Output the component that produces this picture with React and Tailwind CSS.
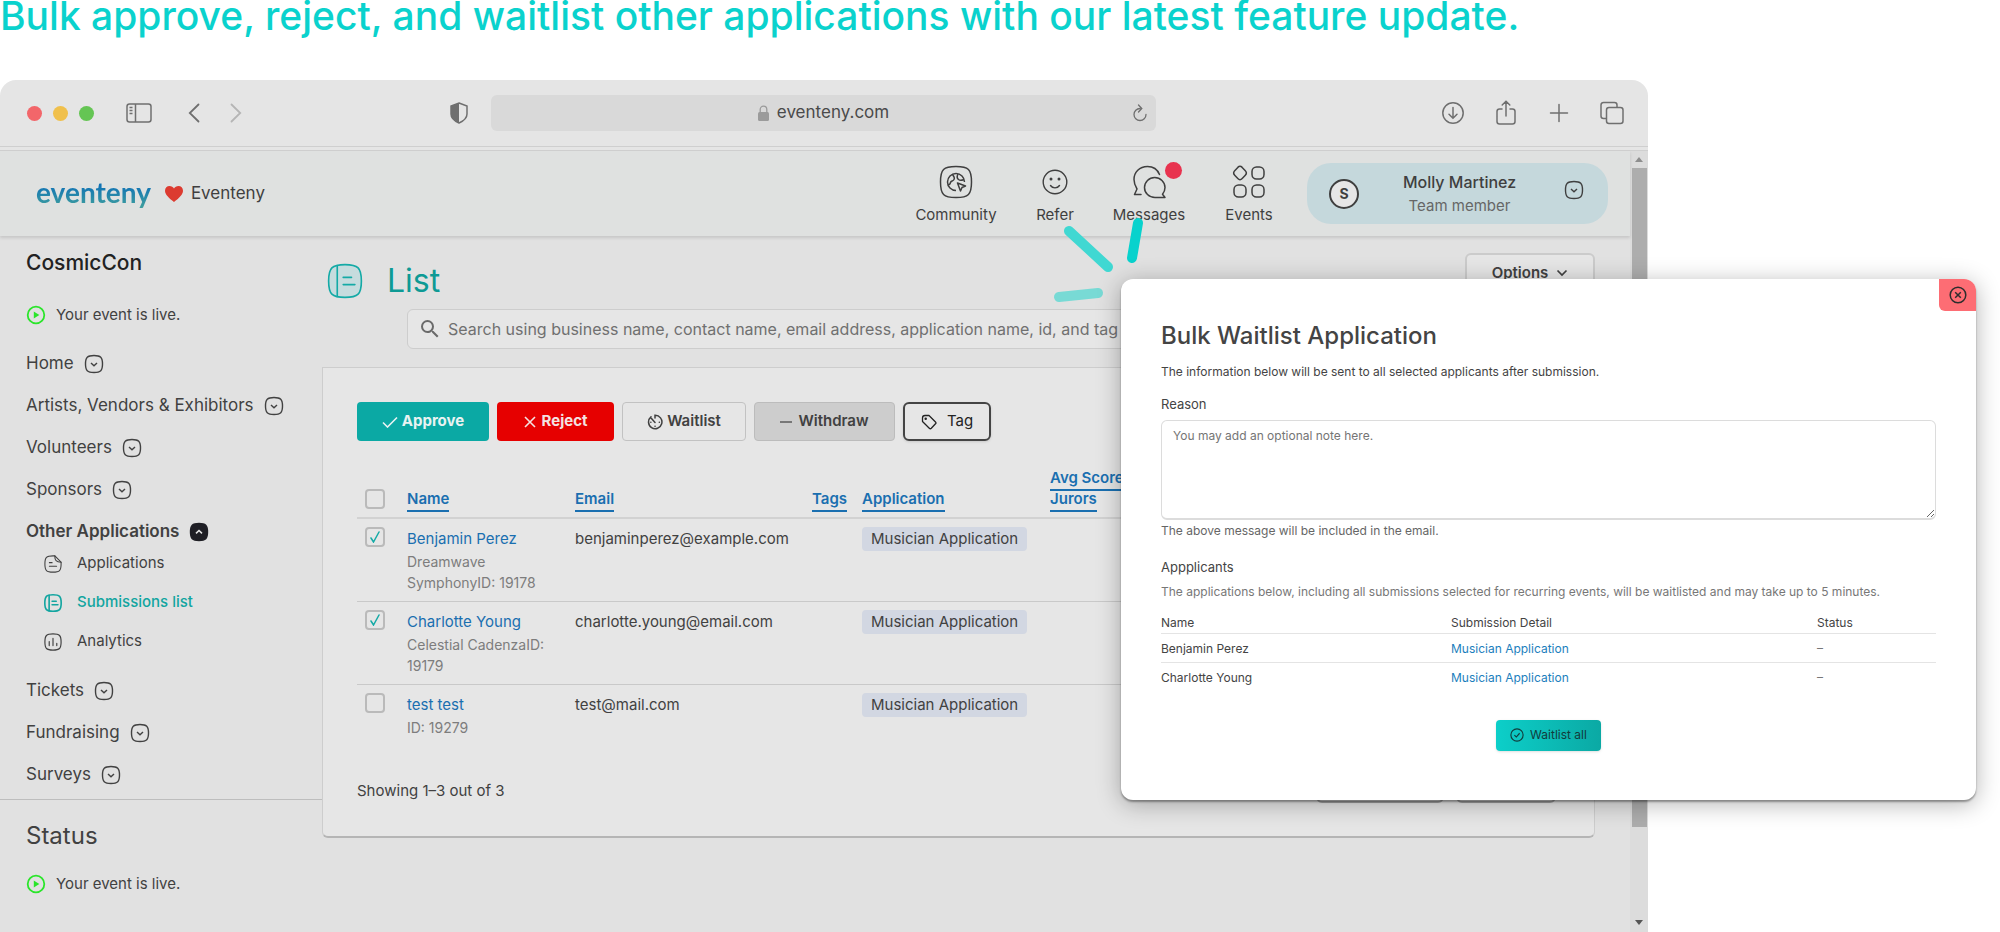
import React from 'react';
import { MdSearch } from 'react-icons/md';

const ChevronBox = ({ up, className = '' }) => (
  <svg viewBox="0 0 20 20" className={`h-5 w-5 shrink-0 ${className}`} fill="none" stroke="currentColor" strokeWidth="1.4">
    <path
      d="M10 1.5c6.600 0 8.500 1.900 8.500 8.500s-1.900 8.500-8.500 8.500S1.500 16.600 1.500 10 3.400 1.500 10 1.500z"
      fill={up ? 'currentColor' : 'none'}
    />
    {up ? (
      <path d="M7 11.300l3-2.800 3 2.800" stroke="#e6e6e6" strokeWidth="1.600" />
    ) : (
      <path d="M7 9l3 2.800L13 9" />
    )}
  </svg>
);

const ListIcon = ({ className = '', strokeWidth = 1.4, fill = 'none' }) => (
  <svg viewBox="0 0 20 20" className={`shrink-0 ${className}`} fill="none" stroke="currentColor" strokeWidth={strokeWidth} strokeLinecap="round">
    <path d="M10 .9c7.300 0 9.100 1.800 9.100 9.100s-1.800 9.100-9.100 9.100S.9 17.300.9 10 2.700.9 10 .9z" fill={fill} />
    <path d="M5.700 1.400v17.200M9 8h4.600M9 12h6.500" />
  </svg>
);

const FileIcon = () => (
  <svg viewBox="0 0 20 20" className="h-[18px] w-[18px] shrink-0" fill="none" stroke="currentColor" strokeWidth="1.200" strokeLinecap="round">
    <path d="M12 1h-2C2.700 1 1 2.700 1 10s1.700 9 9 9 9-1.700 9-9V8z" />
    <path d="M12 1c0 5 1.500 7 7 7M6 8.500h3M6 12.500h8" />
  </svg>
);

const ChartIcon = () => (
  <svg viewBox="0 0 20 20" className="h-[18px] w-[18px] shrink-0" fill="none" stroke="currentColor" strokeWidth="1.300" strokeLinecap="round">
    <path d="M10 1c7.300 0 9 1.700 9 9s-1.700 9-9 9-9-1.700-9-9 1.700-9 9-9z" />
    <path d="M5.800 9.500V14M10 6v8M14.200 11.500V14" />
  </svg>
);

const LiveStatus = () => (
  <div className="flex h-6 items-center gap-[10px] text-[15px]">
    <svg viewBox="0 0 20 20" className="h-5 w-5 shrink-0">
      <circle cx="10" cy="10" r="8.300" fill="none" stroke="#2ae52a" strokeWidth="1.800" />
      <path d="M7.800 6.500l5.500 3.500-5.500 3.500z" fill="#2ae52a" />
    </svg>
    <span>Your event is live.</span>
  </div>
);

const SideItem = ({ label, active }) => (
  <a href="#" className={`flex h-6 items-center gap-[10px] text-[17px] whitespace-nowrap ${active ? 'font-semibold' : ''}`}>
    {label}
    <ChevronBox up={active} className={active ? 'text-[#1f1f25]' : ''} />
  </a>
);

const SubItem = ({ icon, label, active }) => (
  <a href="#" className={`flex h-[39px] items-center gap-[15px] pl-[18px] text-[15px] ${active ? 'text-[#12a5a0]' : ''}`}>
    {icon}
    <span className={active ? 'font-medium' : ''}>{label}</span>
  </a>
);

const Sidebar = () => (
  <aside className="w-[322px] shrink-0 pt-[13px] text-[#414141]">
    <div className="px-[26px]">
      <h2 className="text-[21px] leading-7 font-medium text-[#222]">CosmicCon</h2>
      <div className="mt-[26px]">
        <LiveStatus />
      </div>
      <nav className="mt-[25px] flex flex-col gap-[18px]">
        <SideItem label="Home" />
        <SideItem label="Artists, Vendors & Exhibitors" />
        <SideItem label="Volunteers" />
        <SideItem label="Sponsors" />
        <div>
          <SideItem label="Other Applications" active />
          <SubItem icon={<FileIcon />} label="Applications" />
          <SubItem icon={<ListIcon className="h-[18px] w-[18px]" strokeWidth={1.8} />} label="Submissions list" active />
          <SubItem icon={<ChartIcon />} label="Analytics" />
        </div>
        <SideItem label="Tickets" />
        <SideItem label="Fundraising" />
        <SideItem label="Surveys" />
      </nav>
    </div>
    <div className="mt-3 border-t border-[#bdbdbd] px-[26px] pt-5">
      <h2 className="text-2xl leading-8">Status</h2>
      <div className="mt-5">
        <LiveStatus />
      </div>
    </div>
  </aside>
);

const BrowserBar = () => (
  <div className="grid h-[67px] grid-cols-[491px_1fr_492px] items-center border-b border-[#cfcfcf] text-[#6f6f6f]">
    <div className="flex items-center pr-[23px] pl-[27px]">
      <div className="flex gap-[11px]">
        <span className="h-[15px] w-[15px] rounded-full bg-[#f2666a]" />
        <span className="h-[15px] w-[15px] rounded-full bg-[#f0c04c]" />
        <span className="h-[15px] w-[15px] rounded-full bg-[#65c554]" />
      </div>
      <svg viewBox="0 0 26 20" className="ml-8 h-5 w-[26px]" fill="none" stroke="currentColor" strokeWidth="1.500">
        <rect x="1" y="1" width="24" height="18" rx="2.500" />
        <path d="M9.500 1v18M3.500 4.500h3M3.500 7.500h3M3.500 10.500h3" />
      </svg>
      <svg viewBox="0 0 12 20" className="ml-9 h-5 w-3" fill="none" stroke="currentColor" strokeWidth="1.800" strokeLinecap="round">
        <path d="M10.500 1.500L1.800 10l8.700 8.500" />
      </svg>
      <svg viewBox="0 0 12 20" className="ml-[30px] h-5 w-3 text-[#b5b5b5]" fill="none" stroke="currentColor" strokeWidth="1.800" strokeLinecap="round">
        <path d="M1.500 1.500L10.200 10l-8.700 8.500" />
      </svg>
      <svg viewBox="0 0 18 22" className="ml-auto h-[22px] w-[18px]">
        <path d="M9 1l8 3v8c0 4-3.500 7-8 9-4.500-2-8-5-8-9V4z" fill="none" stroke="currentColor" strokeWidth="1.500" />
        <path d="M9 1v20c-4.500-2-8-5-8-9V4z" fill="currentColor" />
      </svg>
    </div>
    <div className="flex h-9 items-center rounded-md bg-[#d9d9d9] pr-2">
      <div className="flex flex-1 items-center justify-center gap-2 pl-6 text-[17px] text-[#4a4a4a]">
        <svg viewBox="0 0 11 16" className="h-4 w-[11px] text-[#9b9b9b]">
          <rect y="7" width="11" height="9" rx="1.500" fill="currentColor" />
          <path d="M2.200 8V4.500a3.300 3.300 0 016.600 0V8" fill="none" stroke="currentColor" strokeWidth="1.300" />
        </svg>
        eventeny.com
      </div>
      <svg viewBox="0 0 16 18" className="h-[18px] w-4" fill="none" stroke="currentColor" strokeWidth="1.300" strokeLinecap="round">
        <path d="M8 4.500a6 6 0 106 6M6.500 1l3.300 3.500L6.500 8" />
      </svg>
    </div>
    <div className="flex items-center justify-end gap-[29px] pr-6">
      <svg viewBox="0 0 24 24" className="h-6 w-6" fill="none" stroke="currentColor" strokeWidth="1.500" strokeLinecap="round">
        <circle cx="12" cy="12" r="10.200" />
        <path d="M12 6.500v10.500M8 13.300l4 3.900 4-3.900" />
      </svg>
      <svg viewBox="0 0 24 28" className="h-7 w-6" fill="none" stroke="currentColor" strokeWidth="1.500" strokeLinecap="round">
        <path d="M8 10H5.500C3.800 10 3 10.800 3 12.500v10C3 24.200 3.800 25 5.500 25h13c1.700 0 2.500-.8 2.500-2.500v-10c0-1.700-.8-2.500-2.500-2.500H16M12 17V2.500M8.200 6L12 2.200 15.800 6" />
      </svg>
      <svg viewBox="0 0 24 24" className="h-6 w-6" fill="none" stroke="currentColor" strokeWidth="1.500" strokeLinecap="round">
        <path d="M12 3.500v17M3.500 12h17" />
      </svg>
      <svg viewBox="0 0 24 24" className="h-6 w-6" fill="none" stroke="currentColor" strokeWidth="1.500">
        <rect x="6.500" y="6.500" width="16.500" height="16" rx="2.500" />
        <path d="M6.500 17.500H3.500C2 17.500 1 16.700 1 15V4c0-1.700 1-2.500 2.500-2.500h11c1.500 0 2.500.8 2.500 2.500v2.500" />
      </svg>
    </div>
  </div>
);

const NavItem = ({ label, className, children }) => (
  <a href="#" className={`flex flex-col items-center pt-1 ${className}`}>
    <span className="relative flex h-[34px] items-center">{children}</span>
    <span className="mt-1 text-[15px] leading-6">{label}</span>
  </a>
);

const TopNav = () => (
  <header className="relative flex h-[85px] items-center justify-between bg-[#dfe1e0] pr-[22px] pl-9 text-[#3f3f3f] shadow-[0_2px_3px_rgba(0,0,0,0.12)]">
    <div className="flex items-center">
      <span className="bg-linear-to-b from-[#1173b4] from-30% to-[#3c9c9e] to-80% bg-clip-text pb-1 font-['Lato'] text-[28px] leading-9 font-bold text-transparent">
        eventeny
      </span>
      <svg viewBox="0 0 18 16" className="ml-[14px] h-4 w-[18px]">
        <path d="M9 16C4 12 0 8.500 0 4.700 0 1.800 2 0 4.500 0 6.500 0 8.200 1.200 9 2.600 9.800 1.200 11.500 0 13.500 0 16 0 18 1.800 18 4.700 18 8.500 14 12 9 16z" fill="#dc3b30" />
      </svg>
      <span className="ml-2 pt-px text-[17px]">Eventeny</span>
    </div>
    <div className="flex items-center">
      <NavItem label="Community" className="w-[106px]">
        <svg viewBox="0 0 34 34" className="h-[34px] w-[34px]" fill="none" stroke="currentColor" strokeWidth="1.500" strokeLinejoin="round">
          <path d="M17 1.500c12.500 0 15.500 3 15.500 15.500S29.500 32.500 17 32.500 1.500 29.500 1.500 17 4.500 1.500 17 1.500z" />
          <path d="M17 25.500A8.500 8.500 0 1125.500 17" />
          <path d="M13.500 9.500c1.500 2 2.500 3 1.500 5s-3 1-3.500 3-1.500 2.500-2.500 2M19 9c-1 2-1.500 4 .5 5.500s4 .5 5.500 0M18.500 18l8 3-3.500 1.500-1.500 3.500z" />
        </svg>
      </NavItem>
      <NavItem label="Refer" className="w-[92px]">
        <svg viewBox="0 0 26 26" className="h-[26px] w-[26px]" fill="none" stroke="currentColor" strokeWidth="1.400" strokeLinecap="round">
          <circle cx="13" cy="13" r="11.800" />
          <path d="M8.500 16.500c2.200 3.200 6.800 3.200 9 0" />
          <circle cx="9" cy="10" r=".8" fill="currentColor" />
          <circle cx="17" cy="10" r=".8" fill="currentColor" />
        </svg>
      </NavItem>
      <NavItem label="Messages" className="w-24">
        <svg viewBox="0 0 36 34" className="h-[34px] w-9" fill="none" stroke="currentColor" strokeWidth="1.500" strokeLinecap="round" strokeLinejoin="round">
          <path d="M28.500 9.500C26.500 4.500 22 1.500 16.500 1.500 8.500 1.500 3 7.300 3 14.500c0 4 1.500 7 3 9.500L3.500 29.500H10" />
          <path d="M32 32.500H24c-6 0-10.500-4.500-10.500-10s4.500-10 10.200-10 10.300 4.500 10.300 10c0 2.800-1 5-2.500 6.800l2.500 3.200z" />
        </svg>
        <span className="absolute -top-[3px] -right-[15px] h-[17px] w-[17px] rounded-full bg-[#e8334f]" />
      </NavItem>
      <NavItem label="Events" className="w-[104px]">
        <svg viewBox="0 0 34 34" className="h-[34px] w-[34px]" fill="none" stroke="currentColor" strokeWidth="1.500">
          <path d="M8 1.200c.9 0 1.500.5 2.200 1.200l3.100 3.300c1.500 1.600 1.500 2.900 0 4.500l-3.100 3.300c-1.400 1.500-3 1.500-4.400 0l-3.100-3.300c-1.500-1.600-1.500-2.900 0-4.500l3.100-3.300C6.500 1.700 7.100 1.200 8 1.200z" />
          <rect x="20" y="2" width="12" height="12" rx="4.500" />
          <rect x="2" y="20" width="12" height="12" rx="4.500" />
          <rect x="20" y="20" width="12" height="12" rx="4.500" />
        </svg>
      </NavItem>
      <button type="button" className="ml-[6px] flex h-[61px] w-[301px] items-center rounded-3xl bg-[#c5d8dc] pr-6 pl-[22px]">
        <span className="flex h-[30px] w-[30px] items-center justify-center rounded-full border-2 border-[#3f3f3f] bg-[#e6e6e6] text-sm font-bold">
          S
        </span>
        <span className="flex-1 pr-1 text-center">
          <span className="block text-base leading-6 font-medium">Molly Martinez</span>
          <span className="block text-[15px] leading-6 text-[#666]">Team member</span>
        </span>
        <ChevronBox className="-mt-2" />
      </button>
    </div>
  </header>
);

const submissions = [
  { name: 'Benjamin Perez', detail: 'Dreamwave SymphonyID: 19178', email: 'benjaminperez@example.com', checked: true },
  { name: 'Charlotte Young', detail: 'Celestial CadenzaID: 19179', email: 'charlotte.young@email.com', checked: true },
  { name: 'test test', detail: 'ID: 19279', email: 'test@mail.com', checked: false },
];

const Checkbox = ({ label, checked }) => (
  <label className="ml-2 grid h-5 w-5 place-items-center">
    <input
      type="checkbox"
      defaultChecked={checked}
      aria-label={label}
      className="peer col-start-1 row-start-1 h-5 w-5 appearance-none rounded-sm border-2 border-[#bababa]"
    />
    <svg viewBox="0 0 10 12" className="invisible col-start-1 row-start-1 h-3 w-[10px] peer-checked:visible" fill="none" stroke="#14aaa6" strokeWidth="1.500" strokeLinecap="round">
      <path d="M1 7l2.500 4L9 1" />
    </svg>
  </label>
);

const SortLink = ({ children }) => (
  <a href="#" className="border-b-2 border-[#1a6fb0] pb-[2px] font-semibold text-[#1a6fb0]">{children}</a>
);

const SubmissionsTable = () => (
  <table className="mt-[26px] w-full table-fixed text-left text-[15px]">
    <colgroup>
      <col className="w-[50px]" />
      <col className="w-[168px]" />
      <col className="w-[237px]" />
      <col className="w-[50px]" />
      <col className="w-[188px]" />
      <col />
    </colgroup>
    <thead>
      <tr className="border-b-2 border-[#d2d2d2] align-bottom leading-[21px]">
        <th className="pb-2"><Checkbox label="Select all" /></th>
        <th className="pb-2"><SortLink>Name</SortLink></th>
        <th className="pb-2"><SortLink>Email</SortLink></th>
        <th className="pb-2"><SortLink>Tags</SortLink></th>
        <th className="pb-2"><SortLink>Application</SortLink></th>
        <th className="pb-2"><SortLink>Avg Score<br />Jurors</SortLink></th>
      </tr>
    </thead>
    <tbody>
      {submissions.map((s) => (
        <tr key={s.name} className="border-b border-[#c9c9c9] align-top last:border-0">
          <td className="pt-2"><Checkbox label={s.name} checked={s.checked} /></td>
          <td className="pt-2 pr-5 pb-2">
            <a href="#" className="block leading-6 text-[#1a6fb0]">{s.name}</a>
            <p className="text-sm leading-[21px] text-[#7d7d7d]">{s.detail}</p>
          </td>
          <td className="pt-2 leading-6">{s.email}</td>
          <td />
          <td className="pt-2">
            <span className="inline-block rounded-sm bg-[#d2d7e2] px-[9px] leading-6">Musician Application</span>
          </td>
          <td />
        </tr>
      ))}
    </tbody>
  </table>
);

const ListPage = () => (
  <main className="min-w-0 flex-1 pt-[17px] pr-[35px] text-[#414141]">
    <div className="flex h-14 items-center pl-[5px]">
      <ListIcon className="h-9 w-9 text-[#14aaa6]" strokeWidth={0.9} fill="#c6dcde" />
      <h1 className="ml-6 text-[32px] leading-10 text-[#0e9a95]">List</h1>
      <button type="button" className="ml-auto flex h-10 w-[130px] items-center justify-center gap-2 self-start rounded-md border-2 border-[#cbcbcb] bg-[#e6e6e6] text-[15px] font-semibold">
        Options
        <svg viewBox="0 0 12 8" className="h-2 w-3" fill="none" stroke="currentColor" strokeWidth="1.700">
          <path d="M1.500 1.500L6 6l4.500-4.500" />
        </svg>
      </button>
    </div>
    <div className="ml-[85px] flex h-10 items-center rounded-md border border-[#cdcdcd] bg-[#e6e6e6] pl-[10px]">
      <MdSearch className="h-6 w-6 shrink-0 text-[#6a6a6a]" />
      <input
        type="text"
        aria-label="Search"
        placeholder="Search using business name, contact name, email address, application name, id, and tag"
        className="ml-[6px] w-full bg-transparent text-base outline-none placeholder:text-[#707070]"
      />
    </div>
    <section className="mt-[18px] rounded-b-md border border-b-2 border-[#cdcdcd] border-b-[#b5b5b5] bg-[#e6e6e6] px-[34px] pt-[34px] pb-[33px]">
      <div className="flex gap-2 text-[15px] font-bold">
        <button type="button" className="flex h-[39px] w-[132px] items-center justify-center gap-1 rounded-sm bg-[#0ba9a4] text-[#e9f3f2]">
          <svg viewBox="0 0 16 12" className="h-3 w-4" fill="none" stroke="currentColor" strokeWidth="1.600"><path d="M1 6.500L5.500 11 15 1.500" /></svg>
          Approve
        </button>
        <button type="button" className="flex h-[39px] w-[117px] items-center justify-center gap-[6px] rounded-sm bg-[#e60000] text-[#f3e2e2]">
          <svg viewBox="0 0 12 12" className="h-3 w-3" fill="none" stroke="currentColor" strokeWidth="1.600"><path d="M1 1l10 10M11 1L1 11" /></svg>
          Reject
        </button>
        <button type="button" className="flex h-[39px] w-[124px] items-center justify-center gap-1 rounded-sm border border-[#c2c2c2] font-semibold">
          <svg viewBox="0 0 16 16" className="h-4 w-4" fill="none" stroke="currentColor" strokeWidth="1.500" strokeLinecap="round">
            <path d="M4 2.800A6.700 6.700 0 108 1.300V4M4.500 4.500L8 8.500" />
            <path d="M12.300 8.300h.1M8 12.300h.1M3.800 8.300h.1" />
          </svg>
          Waitlist
        </button>
        <button type="button" className="flex h-[39px] w-[141px] items-center justify-center gap-[6px] rounded-sm border border-[#bcbcbc] bg-[#cdcdcd] font-semibold">
          <svg viewBox="0 0 12 2" className="h-[2px] w-3"><path d="M0 1h12" stroke="#777" strokeWidth="2" /></svg>
          Withdraw
        </button>
        <button type="button" className="flex h-[39px] w-[88px] items-center justify-center gap-[10px] rounded-md border-2 border-[#444] font-normal text-[#222] shadow-sm">
          <svg viewBox="0 0 16 16" className="h-4 w-4" fill="none" stroke="currentColor" strokeWidth="1.300" strokeLinejoin="round">
            <path d="M1.500 4C1.500 2.300 2.300 1.500 4 1.500h4L14.500 8c.6.600.6 1.200 0 1.800l-4.200 4.400c-.6.600-1.400.600-2 0L1.500 7.500z" />
            <circle cx="4.700" cy="4.700" r=".6" />
          </svg>
          Tag
        </button>
      </div>
      <SubmissionsTable />
      <div className="mt-[33px] flex items-end justify-between text-[15px] leading-6">
        <p>Showing 1–3 out of 3</p>
        <div aria-hidden="true" className="mr-1 flex gap-3">
          <span className="h-6 w-[128px] rounded-md border-2 border-[#a5a5a5]" />
          <span className="h-6 w-[100px] rounded-md border-2 border-[#a5a5a5]" />
        </div>
      </div>
    </section>
  </main>
);

const ScrollTrack = () => (
  <div aria-hidden="true" className="flex w-[18px] shrink-0 flex-col items-center bg-[#dcdcdc]">
    <svg viewBox="0 0 8 5" className="my-[6px] h-[5px] w-2"><path d="M4 0l4 5H0z" fill="#8e8e8e" /></svg>
    <div className="w-[15px] flex-[660] bg-[#adadad]" />
    <div className="flex-[86]" />
    <svg viewBox="0 0 8 5" className="my-[7px] h-[5px] w-2"><path d="M4 5l4-5H0z" fill="#555" /></svg>
  </div>
);

const WaitlistModal = () => (
  <div
    role="dialog"
    aria-label="Bulk Waitlist Application"
    className="absolute top-[279px] right-6 left-[56%] ml-px rounded-xl bg-white px-10 pt-[41px] pb-[49px] text-xs text-[#444] shadow-[0_2px_2px_rgba(0,0,0,0.35),0_4px_24px_rgba(0,0,0,0.3)]"
  >
    <button type="button" aria-label="Close" className="absolute top-0 right-0 flex h-8 w-[37px] items-center justify-center rounded-tr-xl rounded-bl-md bg-[#fd6d74] text-[#2d2d2d]">
      <svg viewBox="0 0 18 18" className="h-[18px] w-[18px]" fill="none" stroke="currentColor" strokeWidth="1.500">
        <circle cx="9" cy="9" r="7.800" />
        <path d="M6.200 6.200l5.600 5.600M11.800 6.200l-5.600 5.600" />
      </svg>
    </button>
    <h2 className="text-2xl leading-8 font-medium">Bulk Waitlist Application</h2>
    <p className="mt-[10px] leading-5">The information below will be sent to all selected applicants after submission.</p>
    <label htmlFor="reason" className="mt-3 block text-[13px] leading-5">Reason</label>
    <textarea
      id="reason"
      placeholder="You may add an optional note here."
      className="mt-[6px] block h-[100px] w-full rounded-md border border-b-2 border-[#dcdcdc] px-[11px] py-[5px] leading-5 placeholder:text-[#757575]"
    />
    <p className="mt-px leading-5 text-[#666]">The above message will be included in the email.</p>
    <h3 className="mt-4 text-[13px] leading-5">Appplicants</h3>
    <p className="mt-[5px] leading-5 text-[#777]">
      The applications below, including all submissions selected for recurring events, will be waitlisted and may take up to 5 minutes.
    </p>
    <table className="mt-[11px] w-full table-fixed text-left">
      <thead>
        <tr className="border-b border-[#e4e4e4] leading-5">
          <th className="w-[290px] font-normal">Name</th>
          <th className="font-normal">Submission Detail</th>
          <th className="w-[119px] font-normal">Status</th>
        </tr>
      </thead>
      <tbody>
        {submissions.filter((s) => s.checked).map((s) => (
          <tr key={s.name} className="h-[29px] border-b border-[#e4e4e4] last:border-0">
            <td className="pt-px">{s.name}</td>
            <td className="pt-px"><a href="#" className="text-[#1c80bd]">Musician Application</a></td>
            <td className="pb-px text-[#777]">–</td>
          </tr>
        ))}
      </tbody>
    </table>
    <button type="submit" className="mx-auto mt-7 flex h-[31px] w-[105px] items-center justify-center gap-[6px] rounded-sm bg-linear-to-r from-[#0ccfc9] to-[#0ba9a4] text-[#123c3c] shadow">
      <svg viewBox="0 0 16 16" className="h-[14px] w-[14px]" fill="none" stroke="currentColor" strokeWidth="1.300">
        <circle cx="8" cy="8" r="7" />
        <path d="M5 8.200l2.200 2.100L11 6" />
      </svg>
      Waitlist all
    </button>
  </div>
);

const App = () => (
  <div className="relative flex min-h-screen flex-col bg-white font-['Inter',sans-serif]">
    <p className="h-20 text-[39px] leading-8 font-medium text-[#0ad2cd]">
      Bulk approve, reject, and waitlist other applications with our latest feature update.
    </p>
    <div className="flex w-[82.4%] flex-1 flex-col overflow-hidden rounded-t-2xl bg-[#e5e5e5]">
      <BrowserBar />
      <div className="mt-[3px] flex flex-1 border-t border-[#cfcfcf]">
        <div className="flex min-w-0 flex-1 flex-col">
          <TopNav />
          <div className="flex flex-1 bg-[#e1e1e1]">
            <Sidebar />
            <ListPage />
          </div>
        </div>
        <ScrollTrack />
      </div>
    </div>
    <svg viewBox="0 0 100 90" className="absolute top-[216px] left-[52.6%] h-[90px] w-[100px]" fill="none" strokeLinecap="round" strokeWidth="10">
      <path d="M17 15l39 36" stroke="#40d8d2" />
      <path d="M86 7l-6 35" stroke="#08d2cd" />
      <path d="M7 81l39-4" stroke="#78dad5" />
    </svg>
    <WaitlistModal />
  </div>
);

export default App;
